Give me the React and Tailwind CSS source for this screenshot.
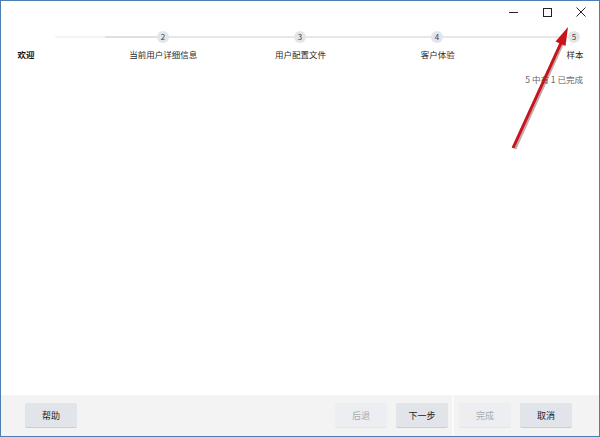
import React from "react";

const steps = [
  { n: null, label: "欢迎", current: true },
  { n: 2, label: "当前用户详细信息" },
  { n: 3, label: "用户配置文件" },
  { n: 4, label: "客户体验" },
  { n: 5, label: "样本" },
];

function Circle({ n }) {
  return (
    <div className="w-[12px] h-[12px] rounded-full bg-[#e2e6eb] flex items-center justify-center text-[8px] leading-none text-[#444] shrink-0">
      {n}
    </div>
  );
}

function Btn({ children, disabled }) {
  return (
    <button
      className={
        "w-[52px] h-[25px] rounded-[2px] text-[9px] leading-none border-b " +
        (disabled
          ? "bg-[#eceef1] text-[#a9acb0] border-[#e2e4e7]"
          : "bg-[#e1e4e8] text-[#222] border-[#c9ccd0]")
      }
    >
      {children}
    </button>
  );
}

export default function App() {
  return (
    <div
      className="relative w-[600px] h-[437px] flex flex-col bg-white border border-[#4b7fb4] overflow-hidden"
      style={{ fontFamily: '"Noto Sans CJK SC", "Noto Sans", sans-serif' }}
    >
      {/* window controls */}
      <div className="h-[22px] flex justify-end items-center pr-[1px]">
        <div className="w-[34px] h-full flex items-center justify-center">
          <div className="w-[9px] h-px bg-[#222]" />
        </div>
        <div className="w-[34px] h-full flex items-center justify-center">
          <div className="w-[9px] h-[9px] border border-[#222]" />
        </div>
        <div className="w-[34px] h-full flex items-center justify-center">
          <svg width="10" height="10" viewBox="0 0 10 10">
            <path d="M0.5 0.5 L9.5 9.5 M9.5 0.5 L0.5 9.5" stroke="#222" strokeWidth="1" />
          </svg>
        </div>
      </div>

      {/* step track */}
      <div className="mt-[8px] h-[12px] flex items-center pl-[54px]">
        <div className="w-[50px] h-[2px] bg-[#f3f4f5]" />
        <div className="w-[52px] h-[2px] bg-[#dde0e4]" />
        <Circle n={2} />
        <div className="w-[125px] h-[2px] bg-[#e6e7e9]" />
        <Circle n={3} />
        <div className="w-[125px] h-[2px] bg-[#e6e7e9]" />
        <Circle n={4} />
        <div className="w-[125px] h-[2px] bg-[#e6e7e9]" />
        <Circle n={5} />
      </div>

      {/* step labels */}
      <div className="mt-[5px] ml-[25px] w-[549px] flex justify-between">
        {steps.map((s, i) => (
          <div key={i} className="w-0 flex flex-col items-center">
            <span
              className={
                "whitespace-nowrap text-[8.5px] leading-[12px] " +
                (s.current ? "font-bold text-[#111]" : "text-[#2a2a2a]")
              }
            >
              {s.label}
            </span>
          </div>
        ))}
      </div>

      <div className="mt-[13px] pr-[16px] flex justify-end">
        <span className="text-[8.5px] leading-[12px] text-[#666] whitespace-pre">5 中有 1 已完成</span>
      </div>

      <div className="flex-1" />

      {/* footer buttons */}
      <div className="h-[41px] bg-[#f3f3f3] flex items-center pl-[24px] pr-[27px]">
        <Btn>帮助</Btn>
        <div className="flex-1" />
        <Btn disabled>后退</Btn>
        <div className="w-[9px]" />
        <Btn>下一步</Btn>
        <div className="w-[4px]" />
        <div className="w-[2px] self-stretch bg-[#fafafa]" />
        <div className="w-[5px]" />
        <Btn disabled>完成</Btn>
        <div className="w-[9px]" />
        <Btn>取消</Btn>
      </div>

      {/* red pointer arrow */}
      <svg className="absolute left-0 top-0 pointer-events-none" width="600" height="437" viewBox="0 0 600 437">
        <line x1="513.2" y1="147.5" x2="560.5" y2="43" stroke="#4a0a0a" strokeOpacity="0.35" strokeWidth="4.5" />
        <line x1="512" y1="147" x2="560" y2="42" stroke="#c8141c" strokeWidth="3" />
        <polygon points="567,26 564.5,45 554.5,40.5" fill="#c8141c" />
      </svg>
    </div>
  );
}
